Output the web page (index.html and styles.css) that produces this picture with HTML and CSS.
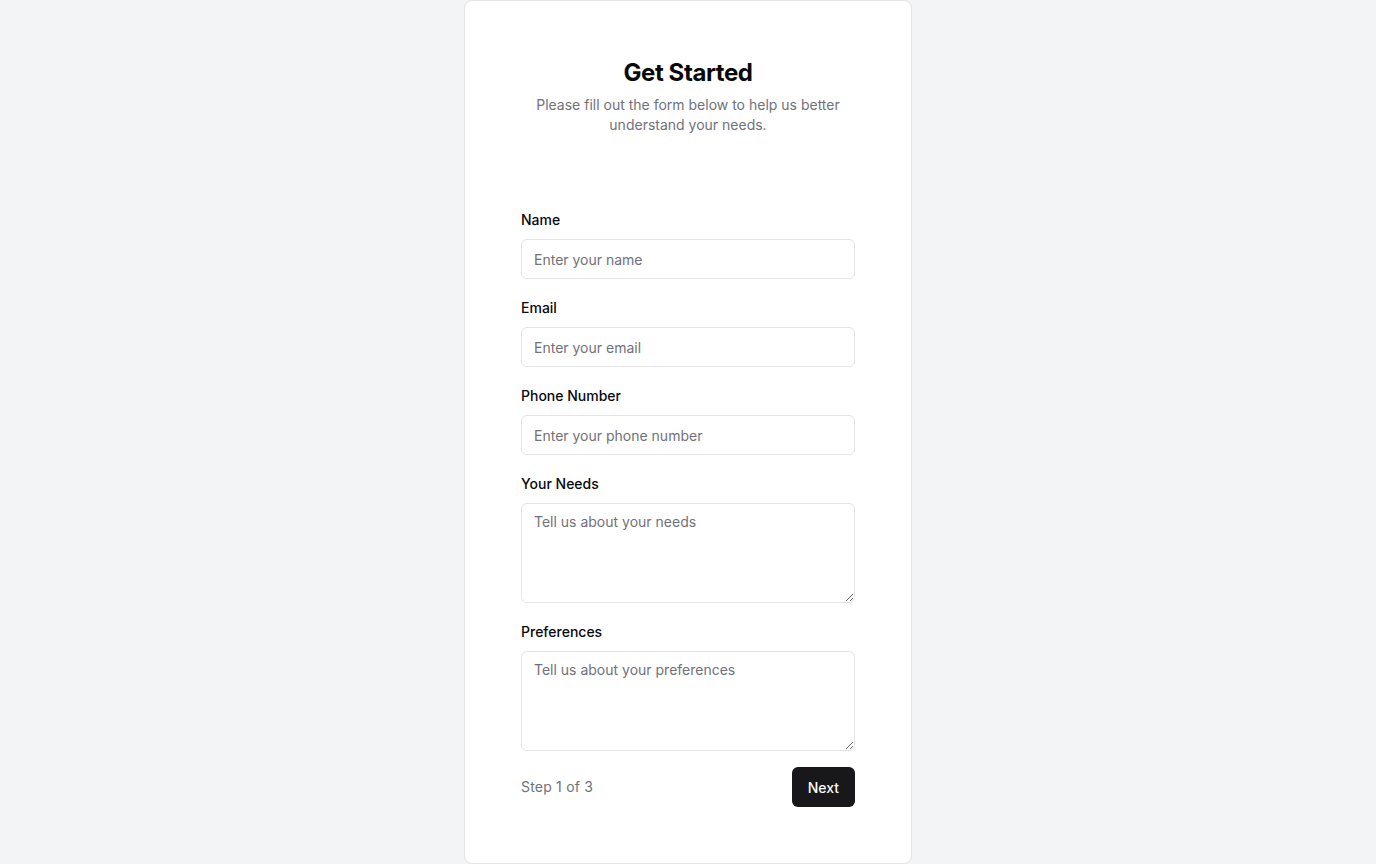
FILE: index.html
```html
<!DOCTYPE html>
<html lang="en">
<head>
<meta charset="utf-8">
<title>Get Started</title>
<link rel="stylesheet" href="styles.css">
</head>
<body>
<main class="page">
  <section class="card">
    <header class="card-header">
      <h1 class="title">Get Started</h1>
      <p class="subtitle">Please fill out the form below to help us better understand your needs.</p>
    </header>
    <form class="form">
      <div class="field">
        <label class="label" for="name">Name</label>
        <input class="input" id="name" type="text" placeholder="Enter your name">
      </div>
      <div class="field">
        <label class="label" for="email">Email</label>
        <input class="input" id="email" type="email" placeholder="Enter your email">
      </div>
      <div class="field">
        <label class="label" for="phone">Phone Number</label>
        <input class="input" id="phone" type="tel" placeholder="Enter your phone number">
      </div>
      <div class="field">
        <label class="label" for="needs">Your Needs</label>
        <textarea class="textarea" id="needs" placeholder="Tell us about your needs"></textarea>
      </div>
      <div class="field">
        <label class="label" for="prefs">Preferences</label>
        <textarea class="textarea" id="prefs" placeholder="Tell us about your preferences"></textarea>
      </div>
      <div class="footer">
        <span class="step">Step 1 of 3</span>
        <button class="btn" type="button">Next</button>
      </div>
    </form>
  </section>
</main>
</body>
</html>
```

FILE: styles.css
```css
* { box-sizing: border-box; }
html, body { margin: 0; padding: 0; }
body {
  background: #f3f4f6;
  font-family: Inter, "Noto Sans", sans-serif;
  color: #09090b;
}
.page {
  display: flex;
  justify-content: center;
  min-height: 100vh;
}
.card {
  width: 448px;
  background: #ffffff;
  border: 1px solid #e4e4e7;
  border-radius: 8px;
  padding: 56px 56px 56px;
  display: flex;
  flex-direction: column;
}
.card-header {
  text-align: center;
  margin-bottom: 72px;
}
.title {
  margin: 0;
  font-size: 24px;
  line-height: 32px;
  font-weight: 700;
  letter-spacing: -0.4px;
  color: #09090b;
}
.subtitle {
  margin: 6px 0 0;
  font-size: 14px;
  line-height: 20px;
  color: #71717a;
}
.form {
  display: flex;
  flex-direction: column;
  gap: 16px;
}
.field {
  display: flex;
  flex-direction: column;
  gap: 7px;
  padding-top: 1px;
}
.label {
  font-size: 14px;
  line-height: 24px;
  font-weight: 500;
  color: #09090b;
}
.input, .textarea {
  width: 100%;
  border: 1px solid #e4e4e7;
  border-radius: 6px;
  background: #fff;
  font-family: Inter, "Noto Sans", sans-serif;
  font-size: 14px;
  line-height: 20px;
  color: #09090b;
  padding: 0 12px;
  outline: none;
}
.input { height: 40px; }
.textarea {
  height: 100px;
  padding: 8px 12px;
  resize: vertical;
}
.input::placeholder, .textarea::placeholder { color: #71717a; }
.footer {
  display: flex;
  justify-content: space-between;
  align-items: center;
}
.step {
  font-size: 14px;
  line-height: 20px;
  letter-spacing: 0.2px;
  color: #71717a;
}
.btn {
  height: 40px;
  padding: 0 16px;
  border: none;
  border-radius: 6px;
  background: #18181b;
  color: #fafafa;
  font-family: Inter, "Noto Sans", sans-serif;
  font-size: 14px;
  font-weight: 500;
  cursor: pointer;
}
```
